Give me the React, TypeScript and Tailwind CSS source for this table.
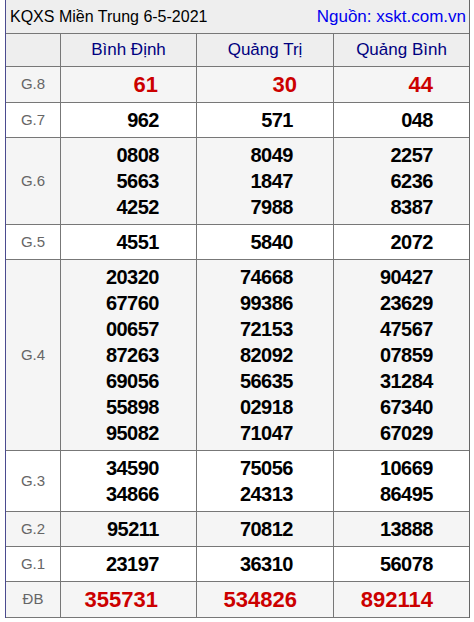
const provinces = ['Bình Định', 'Quảng Trị', 'Quảng Bình'];

type Row = {
  label: string;
  values: string[][];
  red?: boolean;
};

const rows: Row[] = [
  { label: 'G.8', values: [['61'], ['30'], ['44']], red: true },
  { label: 'G.7', values: [['962'], ['571'], ['048']] },
  { label: 'G.6', values: [['0808', '5663', '4252'], ['8049', '1847', '7988'], ['2257', '6236', '8387']] },
  { label: 'G.5', values: [['4551'], ['5840'], ['2072']] },
  {
    label: 'G.4',
    values: [
      ['20320', '67760', '00657', '87263', '69056', '55898', '95082'],
      ['74668', '99386', '72153', '82092', '56635', '02918', '71047'],
      ['90427', '23629', '47567', '07859', '31284', '67340', '67029'],
    ],
  },
  { label: 'G.3', values: [['34590', '34866'], ['75056', '24313'], ['10669', '86495']] },
  { label: 'G.2', values: [['95211'], ['70812'], ['13888']] },
  { label: 'G.1', values: [['23197'], ['36310'], ['56078']] },
  { label: 'ĐB', values: [['355731'], ['534826'], ['892114']], red: true },
];

const colWidth = ['w-[136px]', 'w-[137px]', 'w-[136px]'];
const blackPad = ['pr-[37px]', 'pr-[40px]', 'pr-[36px]'];
const redPad = ['pr-[38px]', 'pr-[36px]', 'pr-[36px]'];

export default function App() {
  return (
    <div className="min-h-[622px] bg-white font-['Liberation_Sans',Arial,sans-serif]">
      <div className="ml-[5px] w-[465px] border-l border-r border-l-[#4b4b8f] border-r-[#666]">
        <div className="flex h-[34px] items-center justify-between border-b border-[#777] bg-[#eeeeee] pl-[4px] pr-[3px] leading-[20px]">
          <span className="text-[16px] text-black">KQXS Miền Trung 6-5-2021</span>
          <span className="text-[17px] text-[#0000ee]">Nguồn: xskt.com.vn</span>
        </div>

        <div className="flex h-[33px] border-b border-[#777] bg-[#eeeeee] text-[17px]">
          <div className="w-[54px]" />
          {provinces.map((p, i) => (
            <div
              key={p}
              className={`${colWidth[i]} flex items-center justify-center border-l border-[#777] text-[#000080]`}
            >
              {p}
            </div>
          ))}
        </div>

        {rows.map((row, r) => (
          <div
            key={row.label}
            className={`flex border-b border-[#777] ${r % 2 === 0 ? 'bg-[#f5f5f5]' : 'bg-white'}`}
          >
            <div className="flex w-[54px] items-center justify-center text-[15px] text-[#666]">
              {row.label}
            </div>
            {row.values.map((nums, i) => (
              <div
                key={i}
                className={`${colWidth[i]} border-l border-[#777] py-[4px] text-right font-bold ${
                  row.red
                    ? `${redPad[i]} text-[22px] leading-[27px] text-[#cc0000]`
                    : `${blackPad[i]} text-[20px] leading-[26px] tracking-[-0.5px] text-black`
                }`}
              >
                {nums.map((n) => (
                  <div key={n}>{n}</div>
                ))}
              </div>
            ))}
          </div>
        ))}
      </div>
    </div>
  );
}
